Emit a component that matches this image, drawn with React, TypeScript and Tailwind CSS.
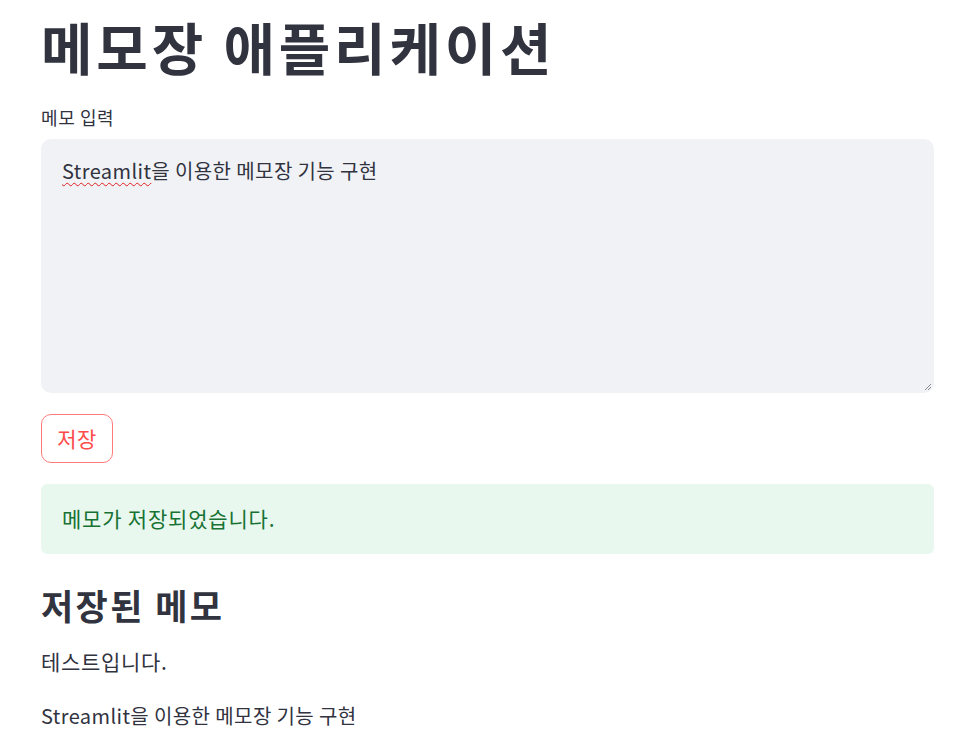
import React from "react";

const font = { fontFamily: '"Noto Sans CJK KR", "Noto Sans", sans-serif' };

function ResizeHandle() {
  return (
    <svg className="absolute right-[2px] bottom-[2px]" width="9" height="9" viewBox="0 0 9 9">
      <path d="M8 2 L2 8 M8 5 L5 8" stroke="#8a8b90" strokeWidth="1" />
    </svg>
  );
}

export default function App() {
  return (
    <div className="min-h-screen bg-white text-[#31333f]" style={font}>
      <div className="ml-[41px] w-[893px] pt-[6px]">
        <h1 className="text-[56px] font-bold leading-[80px] tracking-[3.8px]">메모장 애플리케이션</h1>

        <label className="block mt-[18px] text-[18px] leading-[26px] tracking-[0.6px]">메모 입력</label>
        <div className="relative mt-[9px] h-[254px] rounded-[10px] bg-[#f0f2f6] px-[21px] py-[17px] text-[20px] leading-[30px] tracking-[0.4px]">
          <span className="underline decoration-wavy decoration-[#e02020] decoration-1 underline-offset-[3px]">Streamlit</span>을 이용한 메모장 기능 구현
          <ResizeHandle />
        </div>

        <button className="mt-[21px] h-[49px] w-[72px] rounded-[10px] border border-[#ff7b7b] bg-white text-[21px] tracking-[0.5px] text-[#ff4b4b]">
          저장
        </button>

        <div className="mt-[21px] flex h-[70px] items-center rounded-[6px] bg-[#e8f8ee] px-[21px] text-[21px] tracking-[0.8px] text-[#177233]">
          메모가 저장되었습니다.
        </div>

        <h2 className="mt-[25px] text-[35px] font-bold leading-[52px] tracking-[2.4px]">저장된 메모</h2>
        <p className="mt-[14px] text-[21px] leading-[32px] tracking-[0.7px]">테스트입니다.</p>
        <p className="mt-[23px] text-[20px] leading-[32px] tracking-[0.4px]">Streamlit을 이용한 메모장 기능 구현</p>
      </div>
    </div>
  );
}
